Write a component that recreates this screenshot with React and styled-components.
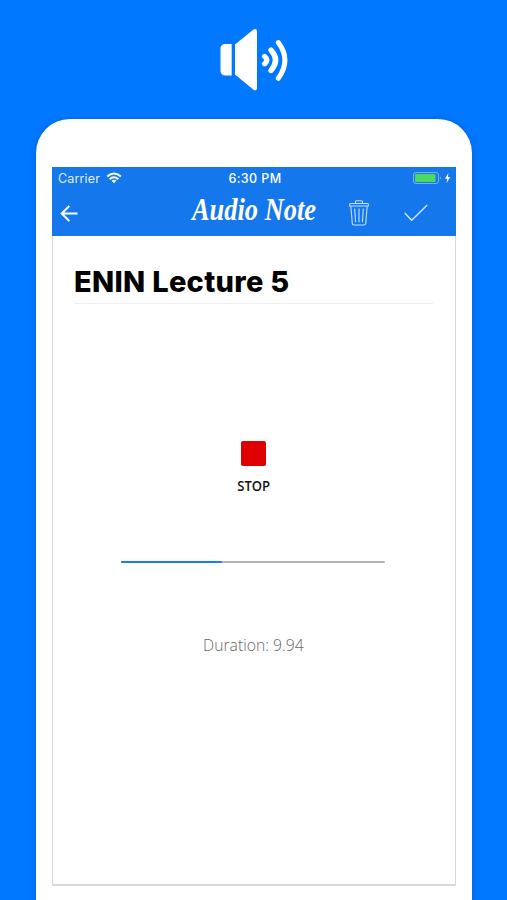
import React from 'react'
import styled, { createGlobalStyle } from 'styled-components'

const GlobalStyle = createGlobalStyle`
  * {
    box-sizing: border-box;
  }

  body {
    margin: 0;
    background: #0078ff;
    overflow: hidden;
  }
`

function SpeakerIcon() {
  return (
    <svg width="68" height="64" viewBox="0 0 68 64">
      <path fill="#fff" d="M5 16h6.7v31.500H5a4.500 4.500 0 0 1-4.500-4.500V20.500A4.500 4.500 0 0 1 5 16z" />
      <path fill="#fff" d="M15 16.500 33.500 1.600Q37 0 37 3.500V60Q37 63.600 33.500 61.800L15 46.500z" />
      <g fill="none" stroke="#fff" strokeLinecap="round">
        <path strokeWidth="5.400" d="M44.700 28.500Q49 32 44.700 35.700" />
        <path strokeWidth="5.400" d="M51 22.200Q60.200 32 51 42.500" />
        <path strokeWidth="5" d="M58.300 14.600Q71.500 32 58.300 50.300" />
      </g>
    </svg>
  )
}

function WifiIcon() {
  return (
    <svg width="16" height="12" viewBox="0 0 16 12">
      <g fill="none" stroke="#fff" strokeWidth="2">
        <path d="M1.200 4.400Q8-1.400 14.800 4.400" />
        <path d="M3.600 7.200Q8 3.300 12.400 7.200" />
      </g>
      <path fill="#fff" d="M5.600 8.800Q8 6.900 10.400 8.800L8 11.300z" />
    </svg>
  )
}

function BatteryIcon() {
  return (
    <svg width="38" height="12" viewBox="0 0 38 12">
      <rect x=".5" y=".5" width="25" height="11" rx="2.500" fill="none" stroke="#7eb0ee" />
      <rect x="2" y="2" width="20.500" height="8" rx="1" fill="#4cd964" />
      <path d="M27 4.300q1.500 1.700 0 3.500z" fill="#a5c8f5" />
      <path d="M35.300 1 32 6.700h2.300L33.500 11 37.300 5.100H35z" fill="#fff" />
    </svg>
  )
}

function BackIcon() {
  return (
    <svg width="18" height="17" viewBox="0 0 18 17">
      <path d="M17.500 8.500H1.500M9.300 1 1.700 8.500l7.600 7.500" fill="none" stroke="#fff" strokeWidth="2" />
    </svg>
  )
}

function TrashIcon() {
  return (
    <svg width="20" height="26" viewBox="0 0 20 26">
      <g fill="none" stroke="#c8defa" strokeWidth="1.100" strokeLinejoin="round">
        <path d="M.6 6V4.500Q.6 3.500 1.600 3.500H18.400Q19.400 3.500 19.400 4.500V6z" />
        <path d="M6.500 3.500V1.800Q6.500.8 7.500.8h5q1 0 1 1v1.700" />
        <path d="M1.800 6 3.300 23.500Q3.500 25 5 25H15Q16.500 25 16.700 23.500L18.200 6" />
        <path d="M5.700 8.500 6.600 22.300M10 8.500V22.300M14.300 8.500 13.400 22.300" />
      </g>
    </svg>
  )
}

function CheckIcon() {
  return (
    <svg width="24" height="18" viewBox="0 0 24 18">
      <path d="M.7 9 7.700 16.300 23.200 1" fill="none" stroke="#dceafc" strokeWidth="1.300" />
    </svg>
  )
}

function App() {
  return (
    <Page>
      <GlobalStyle />
      <Hero>
        <SpeakerIcon />
      </Hero>
      <Phone>
        <Screen>
          <Header>
            <StatusBar>
              <Carrier>
                Carrier
                <WifiIcon />
              </Carrier>
              <Time>6:30 PM</Time>
              <BatteryIcon />
            </StatusBar>
            <NavBar>
              <BackIcon />
              <Title>
                <span>Audio Note</span>
              </Title>
              <Actions>
                <TrashIcon />
                <CheckIcon />
              </Actions>
            </NavBar>
          </Header>
          <Content>
            <NoteName>ENIN Lecture 5</NoteName>
            <StopButton>
              <StopSquare />
              <StopLabel>STOP</StopLabel>
            </StopButton>
            <Track>
              <Progress style={{ width: `${progress}%` }} />
            </Track>
            <Duration>Duration: 9.94</Duration>
          </Content>
        </Screen>
      </Phone>
    </Page>
  )
}

const progress = 38

const Page = styled.div`
  display: flex;
  flex-direction: column;
  width: 507px;
  height: 900px;
  overflow: hidden;
  background: #0078ff;
  font-family: Inter, 'Liberation Sans', sans-serif;
`

const Hero = styled.div`
  display: flex;
  justify-content: center;
  height: 119px;
  padding-top: 28px;
  flex-shrink: 0;
`

const Phone = styled.div`
  width: 435.5px;
  height: 820px;
  flex-shrink: 0;
  margin-left: 36.4px;
  padding: 48px 0 0 15.6px;
  background: #fff;
  border-radius: 34px 34px 0 0;
  box-shadow: 0 1px 7px rgba(0, 40, 110, 0.28);
`

const Screen = styled.div`
  width: 404px;
  height: 719px;
  border: solid #d9d9d9;
  border-width: 0 1px 2px;
`

const Header = styled.div`
  height: 69px;
  margin: 0 -1px;
  background: #1478ec;
  color: #fff;
`

const StatusBar = styled.div`
  display: grid;
  grid-template-columns: 1fr auto 1fr;
  align-items: center;
  height: 22px;
  padding: 0 5px 0 6px;
  font-size: 12.5px;

  > svg {
    justify-self: end;
  }
`

const Carrier = styled.div`
  display: flex;
  align-items: center;
  gap: 6px;
  color: #e0edfc;
  letter-spacing: 0.15px;
`

const Time = styled.div`
  padding-left: 1px;
  font-weight: 500;
  letter-spacing: 0.4px;
`

const NavBar = styled.div`
  display: grid;
  grid-template-columns: 132px 136px 1fr;
  align-items: center;
  height: 47px;
  padding: 0 28px 0 8px;

  > svg {
    margin-top: 2px;
  }
`

const Title = styled.div`
  display: flex;
  height: 41px;

  span {
    font: italic bold 32px/34px 'Liberation Serif', serif;
    white-space: nowrap;
    transform: scaleX(0.825);
    transform-origin: left;
  }
`

const Actions = styled.div`
  display: flex;
  align-items: center;
  justify-content: flex-end;
  gap: 35px;
  height: 44px;
`

const Content = styled.div`
  display: flex;
  flex-direction: column;
  align-items: center;
  padding: 25px 22px 0 21px;
`

const NoteName = styled.h1`
  width: 100%;
  height: 43px;
  margin: 0;
  border-bottom: 1px solid #efefef;
  color: #000;
  font-size: 29px;
  font-weight: 800;
  line-height: 42px;
  letter-spacing: 0.3px;
  white-space: nowrap;
`

const StopButton = styled.button`
  display: flex;
  flex-direction: column;
  align-items: center;
  margin-top: 137px;
  padding: 0;
  border: 0;
  background: none;
`

const StopSquare = styled.div`
  width: 25px;
  height: 25px;
  border-radius: 2px;
  background: #df0000;
`

const StopLabel = styled.div`
  margin-top: 11px;
  color: #111;
  font: 600 14px/18px 'Open Sans', sans-serif;
  transform: scaleX(0.93);
`

const Track = styled.div`
  width: 264px;
  height: 2px;
  margin-top: 66px;
  border-radius: 1px;
  background: #b4b4b4;
`

const Progress = styled.div`
  height: 100%;
  border-radius: 1px;
  background: #157efb;
`

const Duration = styled.div`
  margin: 70px 0 0;
  color: #666;
  font: 300 17px/24px 'Open Sans', sans-serif;
  transform: scaleX(0.925);
`

export default App
